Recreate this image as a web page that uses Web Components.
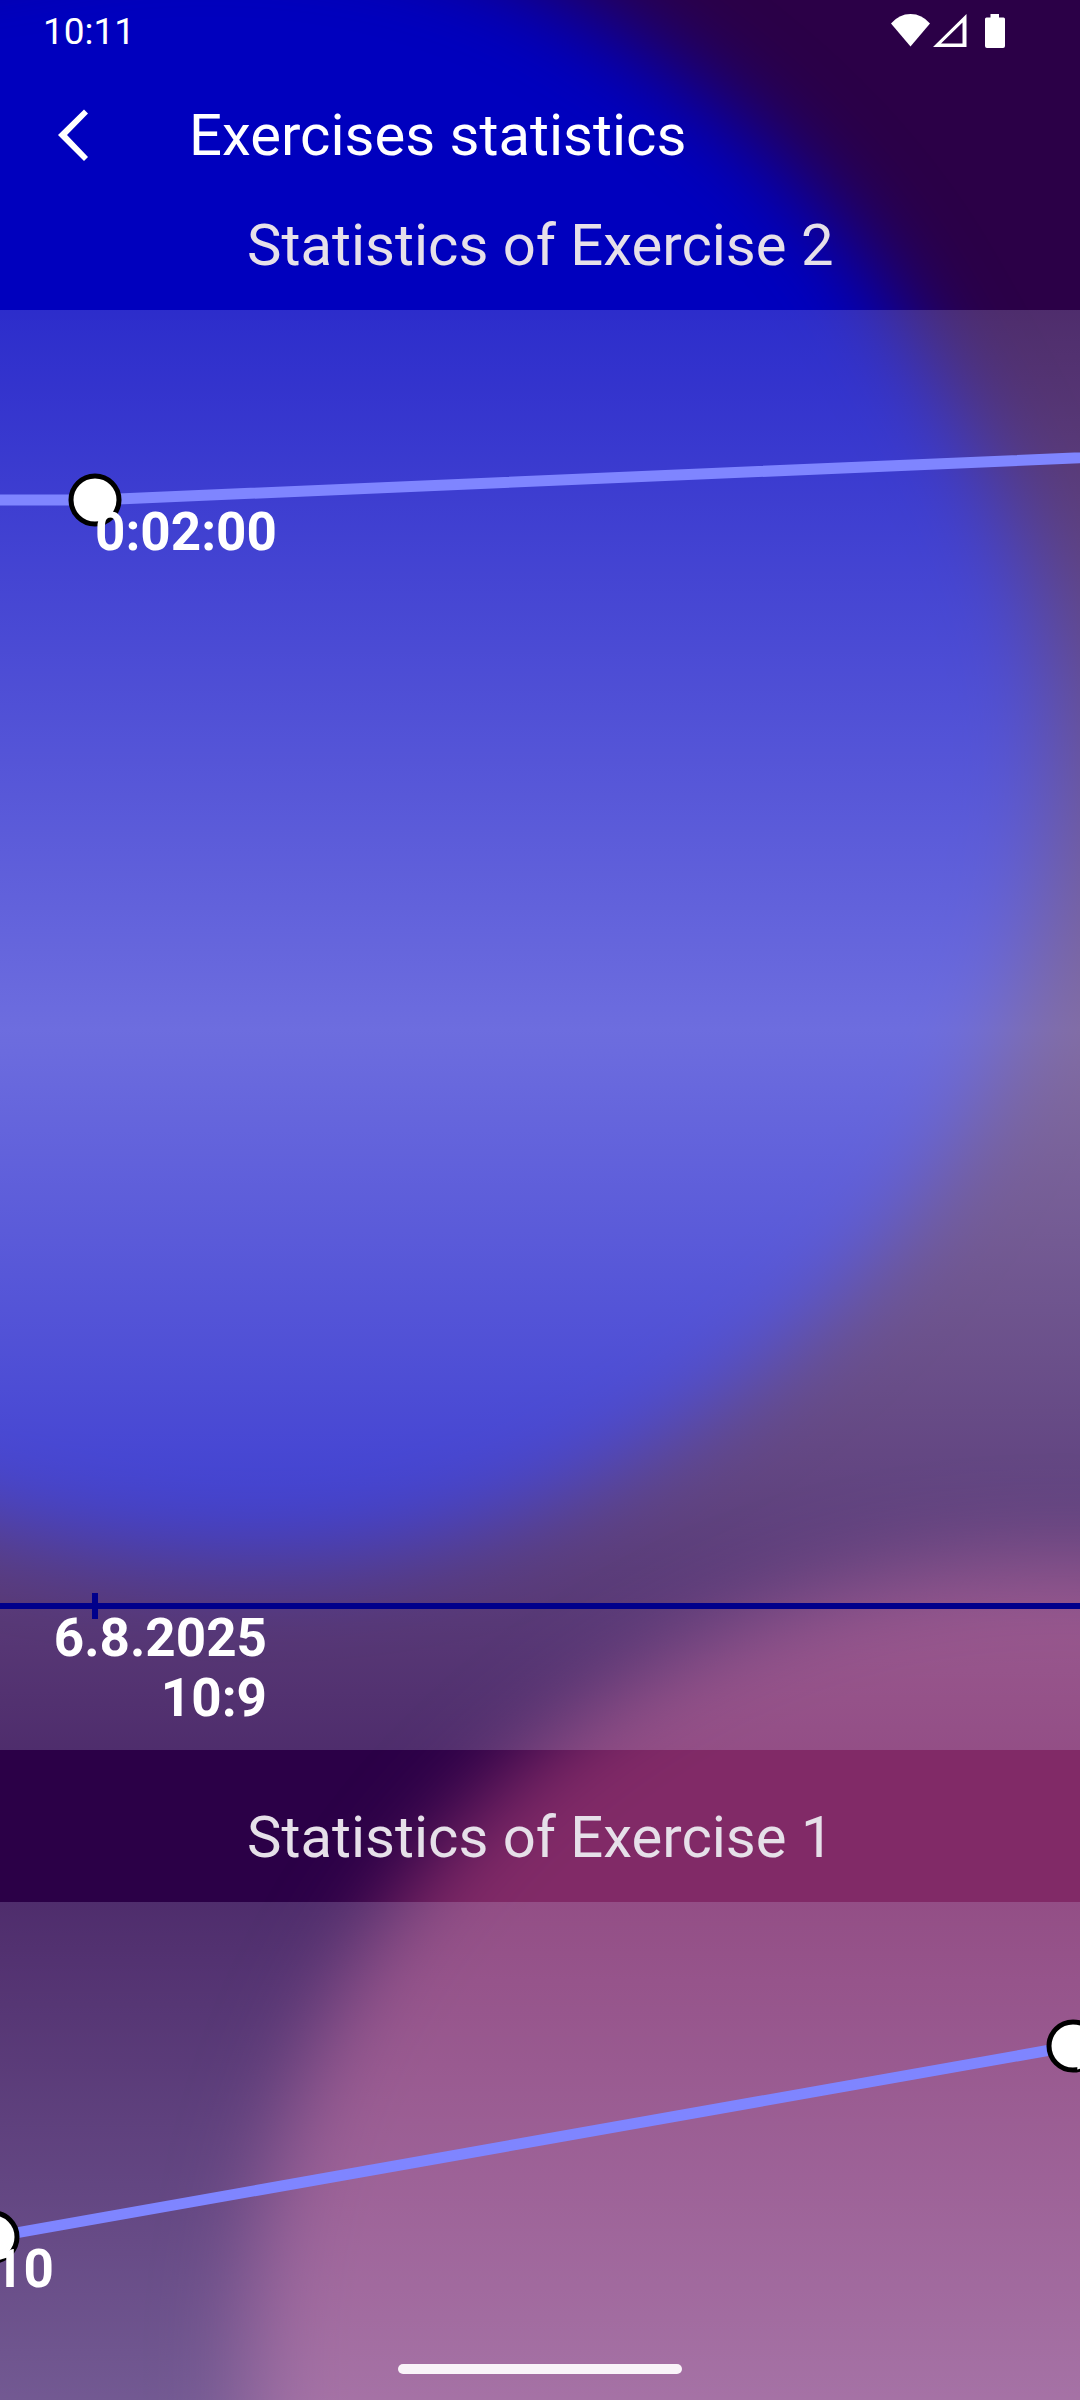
<!DOCTYPE html>
<html lang="en">
<head>
<meta charset="utf-8">
<meta name="viewport" content="width=device-width, initial-scale=1">
<title>Exercises statistics</title>
<style>
  html, body { margin: 0; height: 100%; }
  body { background: #2b0047; font-family: Roboto, "Noto Sans", sans-serif; color: #fff; overflow: hidden; }
</style>
</head>
<body>
<stats-page>
  <status-bar slot="status">10:11</status-bar>
  <app-bar slot="bar">Exercises statistics</app-bar>
  <stat-section>
    <span slot="title">Statistics of Exercise 2</span>
    <time-chart points="-900,190 95,190,0:02:00 1400,134" ticks="95,6.8.2025,10:9"></time-chart>
  </stat-section>
  <stat-section>
    <span slot="title">Statistics of Exercise 1</span>
    <time-chart points="-7,335,10 1073,144,15" ticks=""></time-chart>
  </stat-section>
</stats-page>

<script>
const attach = (el, html) => { el.attachShadow({ mode: "open" }).innerHTML = html; };

// Two soft blobs over the dark base colour
customElements.define("blob-backdrop", class extends HTMLElement {
  constructor() {
    super();
    attach(this, `
      <style>
        :host { display: block; position: absolute; inset: 0; overflow: hidden; background: #2b0047; }
        svg { display: block; width: 100%; height: 100%; }
      </style>
      <svg aria-hidden="true">
        <defs>
          <filter id="soft" x="-20%" y="-20%" width="140%" height="140%" color-interpolation-filters="sRGB">
            <feGaussianBlur stdDeviation="44"/>
          </filter>
        </defs>
        <path d="M-400 0 C-250 -20 -150 -50 0 -65 C200 -110 420 -90 570 0 C725 90 835 200 900 310 C955 410 1058 560 1058 750 C1058 1000 960 1190 800 1335 C645 1475 460 1558 270 1558 C100 1558 -50 1522 -200 1440 L-400 1300 Z" fill="#0000be" filter="url(#soft)"/>
        <circle cx="1060" cy="2370" r="812" fill="#812a67" filter="url(#soft)"/>
      </svg>`);
  }
});

customElements.define("stats-page", class extends HTMLElement {
  constructor() {
    super();
    attach(this, `
      <style>
        :host { display: flex; flex-direction: column; position: relative; height: 100vh; overflow: hidden; }
        header, main { position: relative; }
        main { flex: 1; min-height: 0; overflow: hidden; display: flex; flex-direction: column; gap: 49px; }
        .pill { position: absolute; left: 50%; bottom: 26px; width: 284px; height: 10px; margin-left: -142px;
                border-radius: 5px; background: #f9f4f9; }
      </style>
      <blob-backdrop></blob-backdrop>
      <header><slot name="status"></slot><slot name="bar"></slot></header>
      <main><slot></slot></main>
      <div class="pill"></div>`);
  }
});

customElements.define("status-bar", class extends HTMLElement {
  constructor() {
    super();
    attach(this, `
      <style>
        :host { display: flex; align-items: center; justify-content: space-between; height: 63px;
                padding: 0 72px 0 43px; font-size: 37px; line-height: 44px; }
        svg { display: block; }
      </style>
      <span><slot></slot></span>
      <svg width="120" height="63" viewBox="888 0 120 63" fill="#fff" aria-hidden="true">
        <path d="M910.500 46.500 L891 23.500 Q899 14 910.500 14 Q922 14 930 23.500 Z"/>
        <path fill-rule="evenodd" d="M933 47 L966.500 47 L966.500 14 Z M941 43.500 L962.500 43.500 L962.500 22.500 Z"/>
        <path d="M990.500 14 H999 V17.500 H1003.500 Q1005 17.500 1005 19 V46 Q1005 48 1003 48 H987 Q985 48 985 46 V19 Q985 17.500 986.500 17.500 H990.500 Z"/>
      </svg>`);
  }
});

customElements.define("app-bar", class extends HTMLElement {
  constructor() {
    super();
    attach(this, `
      <style>
        :host { display: flex; align-items: center; height: 144px; padding-left: 23px; gap: 66px; }
        button { width: 100px; height: 100px; padding: 0; border: 0; background: none; color: inherit; flex: none; }
        svg { display: block; margin: auto; }
        h1 { margin: 0; font-size: 58px; line-height: 68px; font-weight: 400; white-space: nowrap; }
      </style>
      <button type="button" aria-label="Back">
        <svg width="32" height="52" viewBox="55 110 32 52" fill="#fff" aria-hidden="true">
          <path d="M56 136 L82 110.500 L86 114.500 L65 136 L86 158 L82 162 Z"/>
        </svg>
      </button>
      <h1><slot></slot></h1>`);
  }
});

customElements.define("stat-section", class extends HTMLElement {
  constructor() {
    super();
    attach(this, `
      <style>
        :host { display: block; flex: none; }
        h2 { margin: 0; padding: 4px 0 31px 247px; font-size: 58px; line-height: 68px; font-weight: 400;
             color: #e6e0e9; white-space: nowrap; }
      </style>
      <h2><slot name="title"></slot></h2>
      <slot></slot>`);
  }
});

// Line chart: "x,y,label" points and "x,date,time" ticks, in the chart's own canvas
customElements.define("time-chart", class extends HTMLElement {
  constructor() {
    super();
    attach(this, `
      <style>
        :host { display: block; height: 1440px; overflow: hidden;
                background: linear-gradient(rgba(218,220,255,.205), rgba(217,217,255,.5), rgba(218,220,255,.205)); }
        svg { display: block; width: 100%; height: 100%; }
        text { font-size: 53px; font-weight: 700; fill: #fff; }
        .line { fill: none; stroke: #7f85ff; stroke-width: 11; }
        .axis { stroke: #00008b; stroke-width: 6; }
        .dot { fill: #fff; stroke: #000; stroke-width: 5; }
      </style>
      <svg role="img" aria-label="Exercise time by date"></svg>`);
  }
  connectedCallback() {
    const read = name => (this.getAttribute(name) || "").split(" ").filter(Boolean).map(p => p.split(","));
    const points = read("points"), ticks = read("ticks");
    const axisY = 1296;
    this.shadowRoot.querySelector("svg").innerHTML =
      `<line class="axis" x1="0" x2="100%" y1="${axisY}" y2="${axisY}"/>` +
      ticks.map(([x, date, time]) =>
        `<line class="axis" x1="${x}" x2="${x}" y1="${axisY - 13}" y2="${axisY + 13}"/>
         <text text-anchor="end" x="${+x + 172}" y="${axisY + 50}">${date}</text>
         <text text-anchor="end" x="${+x + 172}" y="${axisY + 110}">${time}</text>`).join("") +
      `<polyline class="line" points="${points.map(p => p[0] + "," + p[1]).join(" ")}"/>` +
      points.filter(p => p[2]).map(([x, y, label]) =>
        `<circle class="dot" cx="${x}" cy="${y}" r="24"/><text x="${x}" y="${+y + 50}">${label}</text>`).join("");
  }
});
</script>
</body>
</html>
